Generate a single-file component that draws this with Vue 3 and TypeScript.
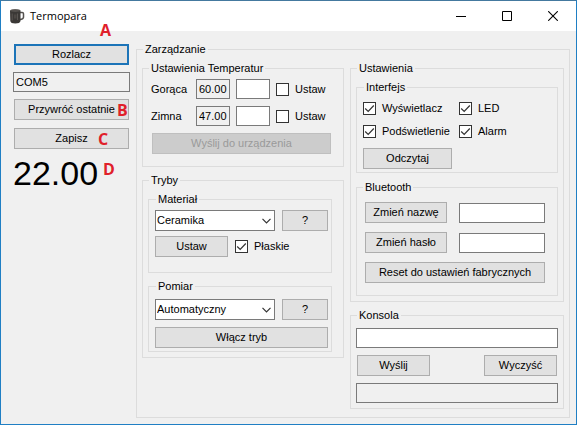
<script setup lang="ts">
import { reactive, ref } from 'vue'

interface TempRow {
  id: string
  label: string
  current: string
  target: string
  apply: boolean
}

interface Option {
  id: string
  label: string
  on: boolean
}

const port = ref('COM5')
const reading = ref('22.00')

const temps = reactive<TempRow[]>([
  { id: 'hot', label: 'Gorąca', current: '60.00', target: '', apply: false },
  { id: 'cold', label: 'Zimna', current: '47.00', target: '', apply: false },
])

const material = ref('Ceramika')
const flat = ref(true)
const mode = ref('Automatyczny')

const options = reactive<Option[]>([
  { id: 'display', label: 'Wyświetlacz', on: true },
  { id: 'led', label: 'LED', on: true },
  { id: 'backlight', label: 'Podświetlenie', on: true },
  { id: 'alarm', label: 'Alarm', on: true },
])

const btName = ref('')
const btPass = ref('')
const command = ref('')
const output = ref('')
</script>

<template>
  <div class="window">
    <header class="titlebar">
      <svg class="app-icon" width="16" height="16" viewBox="0 0 16 16" aria-hidden="true">
        <path d="M11 4.5h2.2q1.300 0 1.300 1.300v3.400q0 1.800-3.500 2.300" fill="none" stroke="#55524f" stroke-width="1.500" />
        <path d="M1 2.500Q6 .3 11.500 2.500V13Q11 15.500 6.300 15.500T1.300 13Z" fill="#3b3836" />
        <ellipse cx="6.300" cy="2.600" rx="5" ry="1.300" fill="#55514e" />
        <path d="M3.200 5.500v7M8.500 5.500v6.500" stroke="#5a5653" stroke-width="1" />
        <path d="M5 6.500h2.500v4H5z" fill="#4d4845" />
      </svg>
      <h1 class="title">Termopara</h1>
      <div class="caption">
        <button type="button" class="cap" aria-label="Minimalizuj">
          <svg width="10" height="10" viewBox="0 0 10 10"><path d="M0 5.500h10" stroke="#000" /></svg>
        </button>
        <button type="button" class="cap" aria-label="Maksymalizuj">
          <svg width="10" height="10" viewBox="0 0 10 10"><path d="M.5.5h9v9h-9z" fill="none" stroke="#000" /></svg>
        </button>
        <button type="button" class="cap" aria-label="Zamknij">
          <svg width="10" height="10" viewBox="0 0 10 10"><path d="M.2.2l9.600 9.600M9.800.2L.2 9.800" stroke="#000" stroke-width="1.100" /></svg>
        </button>
      </div>
    </header>

    <main class="client">
      <section class="side">
        <button type="button" class="btn primary">Rozlacz</button>
        <input v-model="port" class="box readonly port" type="text" readonly aria-label="Port" />
        <button type="button" class="btn">Przywróć ostatnie</button>
        <button type="button" class="btn save">Zapisz</button>
        <output class="reading">{{ reading }}</output>
        <span class="mark mark-a">A</span>
        <span class="mark mark-b">B</span>
        <span class="mark mark-c">C</span>
        <span class="mark mark-d">D</span>
      </section>

      <fieldset class="group manage">
        <legend>Zarządzanie</legend>
        <div class="columns">
          <div class="column">
            <fieldset class="group temps">
              <legend>Ustawienia Temperatur</legend>
              <div v-for="t in temps" :key="t.id" class="temp-row">
                <label :for="t.id">{{ t.label }}</label>
                <input v-model="t.current" class="box readonly" type="text" readonly :aria-label="t.label" />
                <input :id="t.id" v-model="t.target" class="box" type="text" />
                <label class="check"><input v-model="t.apply" type="checkbox" />Ustaw</label>
              </div>
              <button type="button" class="btn" disabled>Wyślij do urządzenia</button>
            </fieldset>

            <fieldset class="group modes">
              <legend>Tryby</legend>
              <fieldset class="group material">
                <legend>Materiał</legend>
                <div class="pick-row">
                  <select v-model="material" class="drop" aria-label="Materiał">
                    <option>Ceramika</option>
                  </select>
                  <button type="button" class="btn">?</button>
                </div>
                <div class="apply-row">
                  <button type="button" class="btn small">Ustaw</button>
                  <label class="check"><input v-model="flat" type="checkbox" />Płaskie</label>
                </div>
              </fieldset>
              <fieldset class="group measure">
                <legend>Pomiar</legend>
                <div class="pick-row">
                  <select v-model="mode" class="drop" aria-label="Pomiar">
                    <option>Automatyczny</option>
                  </select>
                  <button type="button" class="btn">?</button>
                </div>
                <button type="button" class="btn">Włącz tryb</button>
              </fieldset>
            </fieldset>
          </div>

          <div class="column">
            <fieldset class="group settings">
              <legend>Ustawienia</legend>
              <fieldset class="group interface">
                <legend>Interfejs</legend>
                <div class="options">
                  <label v-for="o in options" :key="o.id" class="check">
                    <input v-model="o.on" type="checkbox" />{{ o.label }}
                  </label>
                </div>
                <button type="button" class="btn read">Odczytaj</button>
              </fieldset>
              <fieldset class="group bluetooth">
                <legend>Bluetooth</legend>
                <div class="bt-row">
                  <button type="button" class="btn">Zmień nazwę</button>
                  <input v-model="btName" class="box" type="text" aria-label="Nazwa" />
                </div>
                <div class="bt-row">
                  <button type="button" class="btn">Zmień hasło</button>
                  <input v-model="btPass" class="box" type="text" aria-label="Hasło" />
                </div>
                <button type="button" class="btn">Reset do ustawień fabrycznych</button>
              </fieldset>
            </fieldset>

            <fieldset class="group console">
              <legend>Konsola</legend>
              <input v-model="command" class="box" type="text" aria-label="Polecenie" />
              <div class="console-row">
                <button type="button" class="btn small">Wyślij</button>
                <button type="button" class="btn small">Wyczyść</button>
              </div>
              <input v-model="output" class="box readonly" type="text" readonly aria-label="Odpowiedź" />
            </fieldset>
          </div>
        </div>
      </fieldset>
    </main>
  </div>
</template>

<style>
body {
  margin: 0;
}
</style>

<style scoped>
.window,
.window * {
  box-sizing: border-box;
}

.window {
  display: flex;
  flex-direction: column;
  min-height: 100vh;
  border: 1px solid #1f7fc4;
  border-top-color: #44799f;
  background: #f0f0f0;
  color: #000;
  font: 11px/13px "Liberation Sans", Arial, sans-serif;
}

.titlebar {
  display: flex;
  align-items: center;
  height: 30px;
  padding-left: 8px;
  background: #fff;
}

.title {
  flex: 1;
  margin: 0 0 0 5px;
  font: 11px/16px "Open Sans", "Segoe UI", sans-serif;
}

.caption {
  display: flex;
}

.cap {
  display: grid;
  place-items: center;
  width: 46px;
  height: 28px;
  padding: 0;
  border: 0;
  background: none;
}

.client {
  flex: 1;
  display: grid;
  grid-template-columns: 117px minmax(0, 1fr);
  gap: 6px;
  padding: 12px 6px 6px 12px;
}

.side {
  position: relative;
  display: flex;
  flex-direction: column;
  gap: 7px;
  padding-top: 1px;
}

.side .btn {
  margin: 0 1px;
}

.side .save {
  margin-top: 1px;
}

.reading {
  font-size: 34px;
  line-height: 35px;
}

.mark {
  position: absolute;
  color: #e0202a;
  font: bold 16px/16px "Open Sans", Calibri, sans-serif;
}

.mark-a {
  left: 87px;
  top: -21px;
}

.mark-b {
  left: 104px;
  top: 59px;
}

.mark-c {
  left: 85px;
  top: 88px;
}

.mark-d {
  left: 90px;
  top: 118px;
}

.btn {
  height: 21px;
  padding: 0;
  border: 1px solid #adadad;
  border-radius: 0;
  background: #e1e1e1;
  color: #000;
  font: inherit;
  text-align: center;
  white-space: nowrap;
}

.btn.primary {
  border: 2px solid #1c74b8;
}

.btn:disabled {
  border-color: #bfbfbf;
  background: #ccc;
  color: #9a9a9a;
}

.btn.small {
  width: 73px;
}

.box {
  width: 100%;
  min-width: 0;
  height: 20px;
  margin: 0;
  padding: 0 2px;
  border: 1px solid #7a7a7a;
  border-radius: 0;
  background: #fff;
  color: #000;
  font: inherit;
}

.box.readonly {
  background: #f0f0f0;
}

.drop {
  appearance: none;
  min-width: 0;
  height: 21px;
  margin: 0;
  padding: 0 18px 0 1px;
  border: 1px solid #7a7a7a;
  border-radius: 0;
  background: #fff url("data:image/svg+xml,%3Csvg xmlns='http://www.w3.org/2000/svg' width='9' height='6'%3E%3Cpath d='M.5.8l4 4 4-4' fill='none' stroke='%23333' stroke-width='1.200'/%3E%3C/svg%3E") no-repeat right 3px center;
  color: #000;
  font: inherit;
}

.check {
  display: flex;
  align-items: center;
  gap: 6px;
  white-space: nowrap;
}

.check input {
  appearance: none;
  flex: none;
  width: 13px;
  height: 13px;
  margin: 0;
  border: 1px solid #333;
  background: #fff;
}

.check input:checked {
  background: #fff url("data:image/svg+xml,%3Csvg xmlns='http://www.w3.org/2000/svg' width='11' height='11'%3E%3Cpath d='M1.2 5.500l3 3 5.600-6' fill='none' stroke='%23333' stroke-width='1.200'/%3E%3C/svg%3E") no-repeat center;
}

.group {
  display: flex;
  flex-direction: column;
  min-width: 0;
  margin: 0;
  padding: 6px 5px 5px;
  border: 1px solid #dcdcdc;
}

.group > legend {
  margin-left: 1px;
  padding: 0 2px;
}

.columns {
  display: grid;
  grid-template-columns: minmax(0, 202fr) minmax(0, 214fr);
  gap: 6px;
}

.column {
  display: flex;
  flex-direction: column;
  gap: 7px;
}

.temps {
  gap: 7px;
  padding: 4px 12px 12px 8px;
}

.temps > legend,
.bluetooth > legend {
  margin-left: -2px;
}

.temps > .btn {
  margin-left: 1px;
}

.temp-row {
  display: grid;
  grid-template-columns: 39px 34px 34px 1fr;
  align-items: center;
  column-gap: 6px;
}

.modes {
  gap: 7px;
  padding-right: 11px;
}

.material,
.measure {
  padding: 4px 3px 15px 6px;
  gap: 5px;
}

.measure {
  padding-top: 6px;
  padding-bottom: 3px;
  gap: 7px;
}

.pick-row {
  display: grid;
  grid-template-columns: 1fr 46px;
  gap: 7px;
}

.apply-row {
  display: flex;
  gap: 7px;
}

.settings {
  gap: 8px;
}

.interface {
  gap: 10px;
  padding: 8px 6px 3px;
}

.options {
  display: grid;
  grid-template-columns: 96px 1fr;
  row-gap: 10px;
}

.read {
  width: 89px;
}

.bluetooth {
  gap: 9px;
  padding: 8px 12px 12px 8px;
}

.bt-row {
  display: grid;
  grid-template-columns: 82px 1fr;
  align-items: end;
  gap: 12px;
}

.console {
  gap: 7px;
}

.console-row {
  display: flex;
  justify-content: space-between;
  padding: 0 1px;
}
</style>
